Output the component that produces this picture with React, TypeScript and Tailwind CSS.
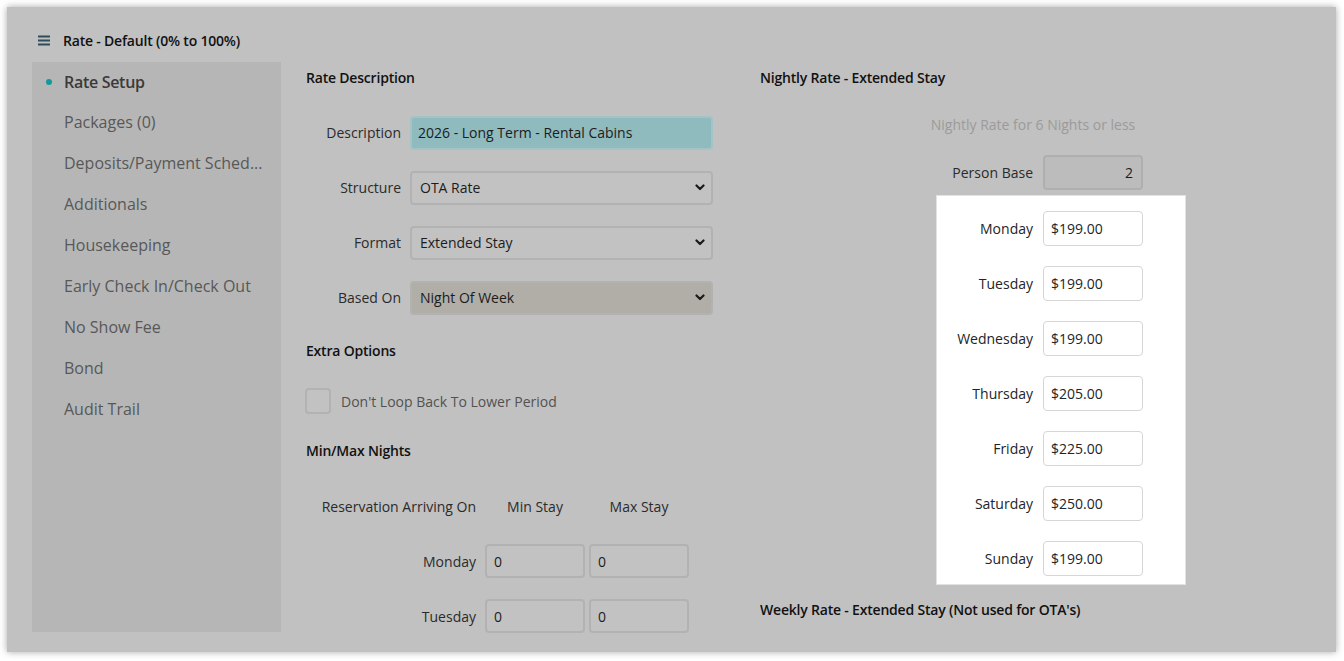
import React from "react";

const font = { fontFamily: '"Open Sans", "Liberation Sans", sans-serif' };

const sideItems = [
  "Packages (0)",
  "Deposits/Payment Sched...",
  "Additionals",
  "Housekeeping",
  "Early Check In/Check Out",
  "No Show Fee",
  "Bond",
  "Audit Trail",
];

const nightly = [
  ["Monday", "$199.00"],
  ["Tuesday", "$199.00"],
  ["Wednesday", "$199.00"],
  ["Thursday", "$205.00"],
  ["Friday", "$225.00"],
  ["Saturday", "$250.00"],
  ["Sunday", "$199.00"],
];

const Chevron = () => (
  <svg width="10" height="7" viewBox="0 0 10 7" className="shrink-0">
    <path d="M1.5 1.5 L5 5 L8.5 1.5" fill="none" stroke="#1a1a1a" strokeWidth="2.2" strokeLinecap="round" strokeLinejoin="round" />
  </svg>
);

const SectionTitle = ({ children, className = "" }: { children: React.ReactNode; className?: string }) => (
  <div className={`h-[32px] leading-[32px] text-[14px] font-semibold tracking-[-0.2px] text-[#111] ${className}`}>{children}</div>
);

const FormRow = ({ label, children }: { label: string; children: React.ReactNode }) => (
  <div className="h-[55px] flex items-center">
    <div className="w-[95px] text-right text-[14px] text-[#2b2b2b]">{label}</div>
    <div className="ml-[9px] w-[303px]">{children}</div>
  </div>
);

const SelectBox = ({ value, bg = "bg-[#c2c2c2]" }: { value: string; bg?: string }) => (
  <div className={`h-[34px] rounded-[4px] border-2 border-[#b2b2b2] ${bg} flex items-center justify-between pl-[8px] pr-[6px] text-[14px] text-[#1c1c1c]`}>
    <span>{value}</span>
    <Chevron />
  </div>
);

const SmallInput = ({ value }: { value: string }) => (
  <div className="w-[100px] h-[34px] rounded-[4px] border-2 border-[#b2b2b2] bg-[#c2c2c2] flex items-center pl-[7px] text-[14px] text-[#1c1c1c]">{value}</div>
);

export default function App() {
  return (
    <div style={font} className="w-[1344px] h-[661px] bg-white pt-[7px] pl-[7px] overflow-hidden">
      <div className="w-[1329px] h-[645px] bg-[#c1c1c1] shadow-[0_0_7px_rgba(0,0,0,0.35)] overflow-hidden">
        <div className="mt-[23px] h-[20px] pl-[31px] flex items-center">
          <svg width="12" height="11" viewBox="0 0 12 11">
            <rect x="0" y="0.5" width="12" height="2" fill="#2f4d5a" />
            <rect x="0" y="4.5" width="12" height="2" fill="#2f4d5a" />
            <rect x="0" y="8.5" width="12" height="2" fill="#2f4d5a" />
          </svg>
          <span className="ml-[13px] text-[14px] font-semibold tracking-[-0.2px] text-[#111]">Rate - Default (0% to 100%)</span>
        </div>

        <div className="mt-[12px] flex pl-[25px]">
          <div className="w-[249px] h-[570px] bg-[#b6b6b6] shrink-0 pt-[0px]">
            <div className="-mt-[1px] h-[41px] flex items-center pl-[14px]">
              <span className="w-[6px] h-[6px] rounded-full bg-[#11999e]" />
              <span className="ml-[12px] text-[16px] font-semibold text-[#3a3a3a] tracking-[-0.3px]">Rate Setup</span>
            </div>
            {sideItems.map((s) => (
              <div key={s} className="h-[40.875px] flex items-center pl-[32px]">
                <span className="text-[16px] text-[#585858] whitespace-nowrap">{s}</span>
              </div>
            ))}
          </div>

          <div className="ml-[25px] w-[407px] shrink-0">
            <SectionTitle>Rate Description</SectionTitle>
            <div className="mt-[11px]">
              <FormRow label="Description">
                <div className="h-[34px] rounded-[4px] border-2 border-[#a4c3c6] bg-[#8fbabe] flex items-center pl-[6px] text-[14px] text-[#1c1c1c]">
                  2026 - Long Term - Rental Cabins
                </div>
              </FormRow>
              <FormRow label="Structure">
                <SelectBox value="OTA Rate" />
              </FormRow>
              <FormRow label="Format">
                <SelectBox value="Extended Stay" />
              </FormRow>
              <FormRow label="Based On">
                <SelectBox value="Night Of Week" bg="bg-[#b0aea6]" />
              </FormRow>
            </div>

            <SectionTitle className="mt-[10px]">Extra Options</SectionTitle>
            <div className="mt-[21px] h-[26px] flex items-center">
              <div className="w-[26px] h-[26px] rounded-[4px] border-2 border-[#b2b2b2] bg-[#c2c2c2] -ml-[1px]" />
              <span className="ml-[10px] text-[14px] text-[#525252]">Don't Loop Back To Lower Period</span>
            </div>

            <SectionTitle className="mt-[21px]">Min/Max Nights</SectionTitle>
            <div className="mt-[22px] h-[34px] flex items-center text-[14px] text-[#2b2b2b]">
              <div className="w-[170px] text-right">Reservation Arriving On</div>
              <div className="ml-[9px] w-[100px] text-center">Min Stay</div>
              <div className="ml-[4px] w-[100px] text-center">Max Stay</div>
            </div>
            {["Monday", "Tuesday"].map((d) => (
              <div key={d} className="mt-[21px] h-[34px] flex items-center text-[14px] text-[#2b2b2b]">
                <div className="w-[170px] text-right">{d}</div>
                <div className="ml-[9px]"><SmallInput value="0" /></div>
                <div className="ml-[4px]"><SmallInput value="0" /></div>
              </div>
            ))}
          </div>

          <div className="ml-[47px] w-[546px] shrink-0">
            <SectionTitle>Nightly Rate - Extended Stay</SectionTitle>
            <div className="mt-[21px] h-[20px] leading-[20px] text-center text-[14px] text-[#9b9b9b]">
              Nightly Rate for 6 Nights or less
            </div>
            <div className="mt-[20px] h-[35px] flex items-center pl-[176px]">
              <div className="w-[97px] text-right text-[14px] text-[#2b2b2b]">Person Base</div>
              <div className="ml-[10px] w-[100px] h-[35px] rounded-[4px] border-2 border-[#afafaf] bg-[#bcbcbc] flex items-center justify-end pr-[8px] text-[14px] text-[#1c1c1c]">2</div>
            </div>
            <div className="mt-[5px] ml-[176px] w-[250px] h-[390px] bg-white border border-[#e2e2e2] pt-[5px]">
              {nightly.map(([d, v]) => (
                <div key={d} className="h-[55px] flex items-center">
                  <div className="w-[96px] text-right text-[14px] text-[#212529]">{d}</div>
                  <div className="ml-[10px] w-[100px] h-[35px] rounded-[4px] border border-[#d6d6d6] bg-white flex items-center pl-[7px] text-[14px] text-[#212529]">{v}</div>
                </div>
              ))}
            </div>
            <SectionTitle className="mt-[9px]">Weekly Rate - Extended Stay (Not used for OTA's)</SectionTitle>
          </div>
        </div>
      </div>
    </div>
  );
}
